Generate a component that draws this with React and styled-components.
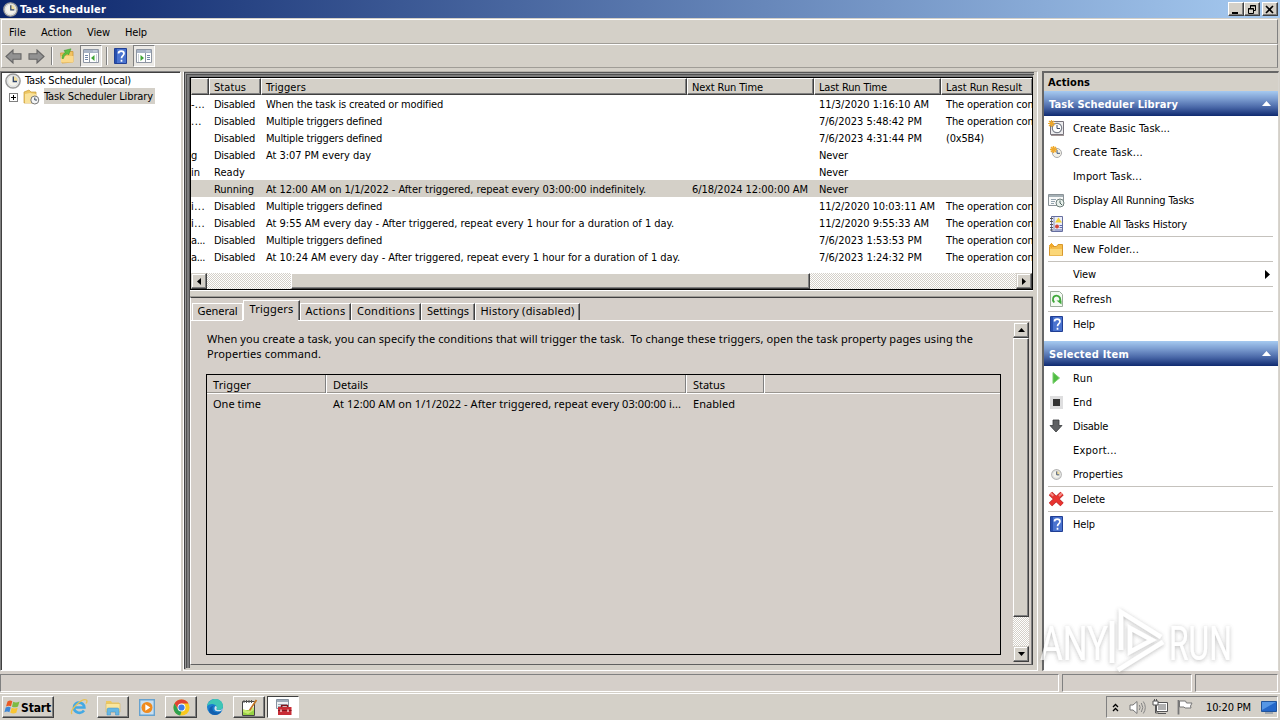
import React, { useLayoutEffect, useRef } from "react";
import styled, { createGlobalStyle, css } from "styled-components";

const FACE = "#d4d0c8";
const PANEL = "#d5cfc9";

const Global = createGlobalStyle`
  * { box-sizing: border-box; }
  html, body { margin: 0; padding: 0; overflow: hidden; background: ${FACE}; }
  body { font-family: "DejaVu Sans Condensed", "DejaVu Sans", sans-serif; font-size: 11px; line-height: 14px; color: #000; }
  svg { display: block; flex: none; }
`;

/* Text that tracks itself so its line fills the width that its design gives. */
const Line = styled.span`
  display: block;
  width: max-content;
  padding-top: 2px;
  white-space: pre;
  flex: none;
`;
function Fit({ w, children }) {
  const ref = useRef(null);
  useLayoutEffect(() => {
    const el = ref.current;
    el.style.letterSpacing = "0px";
    const natural = el.getBoundingClientRect().width;
    el.style.letterSpacing = `${(w - natural) / children.length}px`;
  }, [w, children]);
  return <Line ref={ref}>{children}</Line>;
}

const raised = css`
  border: 1px solid;
  border-color: #fff #404040 #404040 #fff;
  box-shadow: inset -1px -1px 0 #808080;
  background: ${FACE};
`;

const Screen = styled.div`
  width: 1280px;
  height: 720px;
  display: flex;
  flex-direction: column;
  background: ${FACE};
  position: relative;
  overflow: hidden;
`;

/* ---------- title, menu, toolbar ---------- */
const TitleBar = styled.header`
  height: 18px;
  flex: none;
  display: flex;
  align-items: center;
  padding: 0 2px 0 3px;
  gap: 2px;
  background: linear-gradient(90deg, #0a246a, #a6caf0);
  color: #fff;
  font-weight: bold;
`;
const WindowButtons = styled.div`
  margin-left: auto;
  display: flex;
`;
const WindowButton = styled.div`
  ${raised}
  width: 16px;
  height: 14px;
  margin-left: ${(p) => (p.$apart ? 2 : 0)}px;
  display: flex;
  align-items: center;
  justify-content: center;
`;
const MenuBar = styled.nav`
  height: 25px;
  flex: none;
  margin: 1px 2px 0 1px;
  border: 1px solid;
  border-color: #fff #808080 #a09d97 #fff;
  display: flex;
  align-items: center;
  padding-left: 7px;
  gap: 15px;
`;
const ToolBar = styled.div`
  height: 24px;
  flex: none;
  margin: 0 2px 0 1px;
  border: 1px solid;
  border-color: #fff #808080 #a09d97 #fff;
  display: flex;
  align-items: center;
  padding-left: 3px;
`;
const Tool = styled.div`
  width: ${(p) => p.$w || 22}px;
  height: 22px;
  margin-left: ${(p) => p.$ml || 0}px;
  display: flex;
  align-items: center;
  justify-content: center;
  ${(p) =>
    p.$pressed &&
    css`
      border: 1px solid;
      border-color: #808080 #fff #fff #808080;
      background: #ebe9e5;
    `}
`;
const ToolSep = styled.div`
  width: 2px;
  height: 18px;
  margin-left: ${(p) => p.$ml}px;
  border-left: 1px solid #808080;
  border-right: 1px solid #fff;
`;

/* ---------- main area ---------- */
const Main = styled.main`
  height: 600px;
  flex: none;
  margin-top: 3px;
  display: flex;
`;
const Tree = styled.aside`
  width: 181px;
  background: #fff;
  border: 1px solid;
  border-color: #808080 #fff #fff #808080;
  box-shadow: inset 1px 1px 0 #404040;
  padding: 1px 0 0 4px;
`;
const TreeRow = styled.div`
  height: 16px;
  display: flex;
  align-items: flex-start;
  padding-left: ${(p) => p.$indent || 0}px;
  gap: 4px;
`;
const TreeName = styled.span`
  height: 16px;
  margin-top: -1px;
  padding: 0 2px 0 0;
  background: ${(p) => (p.$selected ? FACE : "transparent")};
`;
const Expander = styled.span`
  width: 9px;
  height: 9px;
  border: 1px solid #808080;
  margin: 4px 1px 0 0;
`;

const Center = styled.section`
  width: 855px;
  margin-left: 2px;
  border: 1px solid;
  border-color: #b5b1aa #fff #fff #fff;
  display: flex;
  flex-direction: column;
`;
const Panes = styled.div`
  flex: 1;
  display: flex;
  flex-direction: column;
  padding: 5px 0 0 6px;
  background:
    linear-gradient(#444, #444) 0 0 / 1px 597px no-repeat,
    linear-gradient(#999, #999) 1px 1px / 1px 596px no-repeat,
    linear-gradient(#505050, #505050) 2px 2px / 1px 594px no-repeat,
    linear-gradient(#7d7d7d, #7d7d7d) 3px 3px / 2px 593px no-repeat,
    linear-gradient(#555, #555) 5px 5px / 1px 591px no-repeat,
    linear-gradient(#555, #555) 0 0 / 850px 1px no-repeat,
    linear-gradient(#999, #999) 1px 1px / 849px 1px no-repeat,
    linear-gradient(#505050, #505050) 2px 2px / 848px 1px no-repeat,
    linear-gradient(#7d7d7d, #7d7d7d) 3px 3px / 846px 2px no-repeat,
    ${FACE};
`;
const ListFrame = styled.div`
  height: 213px;
  margin-right: 4px;
  border: 1px solid #000;
  background: #fff;
  overflow: hidden;
  box-shadow: 0 1px 0 #fff;
`;
const Columns = styled.div`
  display: grid;
  grid-template-columns: 18px 52px 426px 127px 127px 92px;
`;
const HeadRow = styled(Columns)`
  height: 17px;
`;
const HeadCell = styled.div`
  ${raised}
  border-left-color: ${(p) => (p.$first ? FACE : "#fff")};
  padding: 0 0 0 4px;
  overflow: hidden;
  white-space: nowrap;
`;
const BodyRow = styled(Columns)`
  height: 17px;
  background: ${(p) => (p.$selected ? FACE : "#fff")};
`;
const Cell = styled.div`
  padding: 1px 0 0 ${(p) => (p.$first ? 0 : 5)}px;
  overflow: hidden;
  white-space: nowrap;
`;
const hatch = css`
  background: repeating-conic-gradient(#fff 0 25%, ${FACE} 0 50%) 0 0 / 2px 2px;
`;
const HScroll = styled.div`
  ${hatch}
  height: 16px;
  margin-top: 8px;
  display: flex;
`;
const ScrollButton = styled.div`
  ${raised}
  border-color: ${FACE} #404040 #404040 ${FACE};
  box-shadow: inset -1px -1px 0 #808080, inset 1px 1px 0 #fff;
  width: 16px;
  height: 16px;
  flex: none;
  display: flex;
  align-items: center;
  justify-content: center;
`;
const HThumb = styled.div`
  ${raised}
  width: 519px;
  margin-left: 84px;
  margin-right: auto;
`;

const Detail = styled.div`
  height: 368px;
  margin: 7px 4px 0 0;
  border: 1px solid;
  border-color: #404040 #404040 #606060 #fff;
  box-shadow: inset -1px 0 0 #808080, 0 -1px 0 #a09d97;
  display: flex;
  flex-direction: column;
  font-family: "Noto Sans", "Open Sans", sans-serif;
  background: ${PANEL};
`;
const Tabs = styled.div`
  height: 23px;
  flex: none;
  display: flex;
  align-items: flex-end;
  padding-left: 1px;
`;
const Tab = styled.div`
  width: ${(p) => p.$w}px;
  height: ${(p) => (p.$active ? 21 : 18)}px;
  border: solid #fff;
  border-width: 1px 1px 0 1px;
  border-right: 1px solid ${(p) => (p.$light ? "#fff" : "#404040")};
  box-shadow: ${(p) => (p.$light ? "none" : "inset -1px 0 0 #808080")};
  display: flex;
  justify-content: center;
  align-items: flex-start;
  ${Line} {
    margin-top: ${(p) => (p.$active ? -1 : -2)}px;
  }
`;
const TabPage = styled.div`
  flex: 1;
  display: flex;
  justify-content: space-between;
  margin-top: -1px;
  position: relative;
  padding: 2px 3px 1px 15px;
  &::before {
    content: "";
    position: absolute;
    left: 0;
    right: 2px;
    top: 0;
    height: 1px;
    background: linear-gradient(90deg, #fff 52px, ${PANEL} 52px, ${PANEL} 107px, #fff 107px);
  }
`;
const PageBody = styled.div`
  width: 795px;
`;
const Paragraph = styled.div`
  height: 52px;
  padding: 7px 0 0 1px;
  line-height: 15px;
  display: flex;
  flex-direction: column;
  align-items: flex-start;
  ${Line} + ${Line} {
    padding-top: 0;
  }
`;
const TriggerTable = styled.div`
  height: 281px;
  border: 1px solid #000;
`;
const TriggerCols = styled.div`
  display: grid;
  grid-template-columns: 119px 360px 78px 1fr;
`;
const TriggerHead = styled(TriggerCols)`
  height: 19px;
  border-bottom: 1px solid #fff;
  box-shadow: inset 0 -1px 0 #99958f;
`;
const TriggerCell = styled.div`
  padding: 1px 0 0 6px;
  height: 18px;
  & + & {
    padding-left: 7px;
  }
  ${(p) => p.$edge && css`border-right: 1px solid #808080; box-shadow: 1px 0 0 #fff;`}
`;
const VScroll = styled.div`
  ${hatch}
  width: 16px;
  height: 340px;
  display: flex;
  flex-direction: column;
`;
const VThumb = styled.div`
  ${raised}
  height: 279px;
  margin-bottom: auto;
`;

/* ---------- actions ---------- */
const Actions = styled.aside`
  width: 237px;
  margin-left: 4px;
  border: 1px solid;
  border-color: #808080 #d8d5cf #fff #666;
  border-left-width: 2px;
  border-top-width: 2px;
  background: #fff;
  border-top-color: #666;
`;
const ActionsTitle = styled.div`
  height: 18px;
  padding: 1px 0 0 4px;
  font-weight: bold;
  background: ${FACE};
`;
const GroupTitle = styled.div`
  height: 25px;
  display: flex;
  align-items: center;
  justify-content: space-between;
  padding: 0 7px 0 5px;
  margin-top: ${(p) => p.$mt || 0}px;
  color: #fff;
  font-weight: bold;
  background: linear-gradient(#a6caf0, #7e9fd2 30%, #4a68a8 65%, #0f2a70);
`;
const ActionRow = styled.div`
  height: 24px;
  display: flex;
  align-items: center;
  padding: 0 8px 0 3px;
`;
const IconSlot = styled.div`
  width: 18px;
  height: 18px;
  margin-right: 8px;
  display: flex;
  align-items: center;
  justify-content: center;
`;
const Push = styled.div`
  margin-left: auto;
`;
const Rule = styled.hr`
  height: 1px;
  border: 0;
  margin: 0 5px 0 4px;
  background: #c5c2bd;
`;

/* ---------- status bar and taskbar ---------- */
const StatusBar = styled.footer`
  height: 21px;
  flex: none;
  padding-top: 3px;
  display: flex;
  gap: 3px;
  background: ${PANEL};
`;
const StatusPart = styled.div`
  width: ${(p) => p.$w}px;
  border: 1px solid;
  border-color: #808080 #fff #fff #808080;
`;
const TaskBar = styled.footer`
  flex: 1;
  margin-top: 1px;
  border-top: 1px solid #fff;
  display: flex;
  align-items: flex-start;
  padding: 2px 2px 0 2px;
`;
const StartButton = styled.div`
  ${raised}
  width: 52px;
  height: 22px;
  display: flex;
  align-items: center;
  padding-left: 1px;
  margin-right: 9px;
  gap: 0;
  font-weight: bold;
  font-size: 12px;
`;
const TaskButton = styled.div`
  width: 32px;
  height: 22px;
  margin-right: 2px;
  display: flex;
  align-items: center;
  justify-content: center;
  ${(p) => p.$open && raised}
  ${(p) =>
    p.$active &&
    css`
      border: 1px solid;
      border-color: #404040 #fff #fff #404040;
      background: #fff;
    `}
`;
const Tray = styled.div`
  width: 172px;
  height: 22px;
  margin-left: auto;
  border: 1px solid;
  border-color: #808080 #fff #fff #808080;
  display: flex;
  align-items: center;
  padding: 0 0 0 5px;
`;
const TrayItem = styled.div`
  margin-right: ${(p) => p.$mr || 0}px;
`;
const Watermark = styled.div`
  position: absolute;
  left: 1038px;
  top: 604px;
  pointer-events: none;
`;

/* ---------- icons ---------- */
const Clock = ({ s = 16, ring = "#9a9a9a" }) => (
  <svg width={s} height={s} viewBox="0 0 16 16">
    <circle cx="8" cy="8" r="7.1" fill="#f5f3ea" stroke={ring} strokeWidth="1.5" />
    <path d="M8 8V3a5 5 0 0 1 5 5z" fill="#f3df9e" />
    <circle cx="8" cy="8" r="5.4" fill="none" stroke="#cfd6e2" strokeWidth=".8" />
    <path d="M8.3 3.500V8.500H12" fill="none" stroke="#30456b" strokeWidth="1.300" />
  </svg>
);
const FolderClock = () => (
  <svg width="17" height="16" viewBox="0 0 17 16">
    <path d="M1 3 6 1l2 2h5v11H1z" fill="#edc662" stroke="#c99c3a" strokeWidth=".7" />
    <path d="m2 5 5-1 6 1v9H2z" fill="#f9e29b" />
    <circle cx="11.800" cy="11" r="4" fill="#f4f5f6" stroke="#777" />
    <path d="M11.800 8.500V11H14" fill="none" stroke="#345" />
  </svg>
);
const Arrow = ({ flip }) => (
  <svg width="17" height="15" viewBox="0 0 17 15">
    <path
      transform={flip ? "matrix(-1 0 0 1 17 0)" : undefined}
      d="M1 7.500 8 1v3.700h8v5.600H8V14z"
      fill="#929292"
      stroke="#666"
      strokeWidth="1.100"
    />
  </svg>
);
const UpFolder = () => (
  <svg width="16" height="16" viewBox="0 0 16 16">
    <path d="M1.500 5h5l1.500-1.500h6V14l-11 1z" fill="#f2c261" stroke="#cf9837" strokeWidth=".8" />
    <path d="M2 8h12.500v6.500H2z" fill="#fbd98b" />
    <path d="M3 10.500C3 7.500 4 5.500 6.500 4.500L5 2.500 12 .800 9.500 7 8.300 5.800C6.500 6.500 5 8 4.500 10.500z" fill="#5fc043" stroke="#399424" strokeWidth=".5" />
  </svg>
);
const PaneIcon = ({ flip }) => (
  <svg width="16" height="14" viewBox="0 0 16 14">
    <path d="M.5.5h15v13H.5z" fill="#fff" stroke="#8e96a3" />
    <path d="M1 1h14v3H1z" fill="#a9b4c6" />
    <path d="M10.500 2h1M12.500 2h1" stroke="#fff" />
    <g transform={flip ? "matrix(-1 0 0 1 16 0)" : undefined}>
      <path d="M6.500 4v9" stroke="#8e96a3" />
      <path d="M2 6.500h3M2 8.500h3M2 10.500h3" stroke="#7186a8" />
      <path d="m8 9 3.500-3v6z" fill="#3fa535" />
      <path d="M13.500 5v8" stroke="#ccd1d8" />
    </g>
  </svg>
);
const HelpIcon = () => (
  <svg width="13" height="16" viewBox="0 0 13 16">
    <path d="M.5.5h12v15H.5z" fill="#4a73cf" stroke="#213f94" />
    <path d="M1 1h2v14H1z" fill="#2750b0" />
    <path d="M4.500 5.500C4.500 2.300 10 2.300 10 5.500 10 7.600 7.500 7.500 7.500 10.200M7.500 11.700v2" fill="none" stroke="#fff" strokeWidth="1.700" />
  </svg>
);
const BasicTask = () => (
  <svg width="16" height="16" viewBox="0 0 16 16">
    <path d="M2.500 1.500h13v13h-13z" fill="#ececee" stroke="#77737c" />
    <path d="M3 15.300h13" stroke="#8b7c7c" />
    <circle cx="9" cy="8" r="4.700" fill="#fff" stroke="#7c818c" strokeWidth="1.200" />
    <path d="M9 5v3.500h3" fill="none" stroke="#3c4b67" />
    <path d="M3.500 0v7M0 3.500h7M1 1l5 5M6 1 1 6" stroke="#eda72c" strokeWidth="1.200" />
  </svg>
);
const NewTask = () => (
  <svg width="14" height="14" viewBox="0 0 14 14">
    <circle cx="8" cy="8" r="4.500" fill="#f3f1e7" stroke="#a9a9aa" />
    <path d="M8 5v3.300h3" fill="none" stroke="#3d587e" />
    <path d="M4.500 1v7M1 4.500h7M2 2l5 5M7 2 2 7" stroke="#f0a92b" strokeWidth="1.500" />
  </svg>
);
const RunningTasks = () => (
  <svg width="17" height="15" viewBox="0 0 17 15">
    <path d="M.5 1.500h15v11H.5z" fill="#f8f9f9" stroke="#8a9297" />
    <path d="M1 2h14v2H1z" fill="#a5b0b5" />
    <path d="M3 6.500h5M3 8.500h4M3 10.500h3M10 6.500h4" stroke="#94a3ae" />
    <circle cx="12" cy="10" r="4" fill="#e9f1ec" stroke="#6f7f7c" />
    <path d="M12 7.500V10l2 2" fill="none" stroke="#4a605c" />
  </svg>
);
const HistoryIcon = () => (
  <svg width="15" height="16" viewBox="0 0 15 16">
    <path d="M2.500.5h11v15h-11z" fill="#eceef7" stroke="#666fa0" />
    <path d="M5 1v14" stroke="#8990b5" />
    <path d="M1 2.500h3M1 5.500h3M1 8.500h3M1 11.500h3M1 14h3" stroke="#555" />
    <path d="m9.500 1.500 3.500 5H6z" fill="#f2d235" />
    <circle cx="8" cy="10.500" r="2" fill="#d44637" />
    <path d="M10.500 9.500H13M10.500 11.500H13M6 14h7" stroke="#5d69ad" />
  </svg>
);
const NewFolder = () => (
  <svg width="16" height="15" viewBox="0 0 16 15">
    <path d="M1.500 4.500h7l1.500-2h4.500v11h-13z" fill="#f5bd4b" stroke="#d8982c" />
    <path d="M2 7h12v6.500H2z" fill="#fbd778" />
    <path d="M3.500 1v5M1 3.500h5M2 2l3 3M5 2 2 5" stroke="#f0a92b" />
  </svg>
);
const RefreshIcon = () => (
  <svg width="13" height="16" viewBox="0 0 13 16">
    <path d="M.5.5h9l3 3v12H.5z" fill="#f4faf3" stroke="#9cac9b" />
    <path d="M4.300 11.500C1.500 8.500 3.300 4.700 6.500 4.700s4.800 3.500 3 5.800" fill="none" stroke="#3fa83a" strokeWidth="1.800" />
    <path d="M6.500 9.500h5v4z" fill="#3fa83a" />
  </svg>
);
const RunIcon = () => (
  <svg width="14" height="14" viewBox="0 0 14 14">
    <path d="m4 1.500 6.500 5.500L4 12.500z" fill="#51bd43" stroke="#79cf6e" />
  </svg>
);
const EndIcon = () => (
  <svg width="13" height="13" viewBox="0 0 13 13">
    <path d="M0 0h13v13H0z" fill="#dededf" />
    <path d="M3 3h7v7H3z" fill="#333" />
  </svg>
);
const DisableIcon = () => (
  <svg width="14" height="14" viewBox="0 0 14 14">
    <path d="M4 1h6v5.500h3L7 13 1 6.500h3z" fill="#5f6163" stroke="#393b3d" strokeWidth=".8" />
  </svg>
);
const DeleteIcon = () => (
  <svg width="17" height="16" viewBox="0 0 17 16">
    <path d="M2.500 2.500 14 13.500M14 2.500 2.500 13.500" stroke="#b92e2d" strokeWidth="4.800" />
    <path d="M2.500 2.500 14 13.500M14 2.500 2.500 13.500" stroke="#e83430" strokeWidth="3.600" />
    <path d="m2.300 2 3 2.800M14 2.300 11 5.100" stroke="#f58a84" strokeWidth="2" />
  </svg>
);
const Tri = ({ dir, c = "#000", w = 7, h = 4 }) => {
  const d = {
    up: `M0 ${h}H${w}L${w / 2} 0z`,
    down: `M0 0H${w}L${w / 2} ${h}z`,
    left: `M${w} 0V${h}L0 ${h / 2}z`,
    right: `M0 0V${h}L${w} ${h / 2}z`,
  }[dir];
  return (
    <svg width={w} height={h}>
      <path d={d} fill={c} />
    </svg>
  );
};
const WindowsFlag = () => (
  <svg width="17" height="16" viewBox="0 0 17 16">
    <path d="M3.500 2.500C5.500 1.200 7 1.500 8.300 2.300L7 7.300C5.500 6.400 4 6.500 2 7.400z" fill="#ea5a24" />
    <path d="M9.200 2.800c2 1 4 .9 6.300-.3L14 7.500c-2 1-4 1.200-6 .2z" fill="#7dbb42" />
    <path d="M1.700 8.400c2-1 3.700-1 5 0L5.400 13.300c-1.500-1-3-1-5-.1z" fill="#3e87d6" />
    <path d="M7.700 8.800c2 1 3.900.9 6-.1l-1.400 5c-2 1-4 1-6 0z" fill="#f9c532" />
  </svg>
);
const Explorer = () => (
  <svg width="18" height="17" viewBox="0 0 18 17">
    <path d="M2 2h5l1 1.500h7V12H2z" fill="#edc85e" />
    <path d="M2 4.500h14V13H2z" fill="#fae69d" stroke="#d8b75b" strokeWidth=".6" />
    <path d="M3 16V10.500q0-1.500 1.500-1.500h9q1.500 0 1.500 1.500V16h-3.500v-3h-5v3z" fill="#65b7e3" stroke="#4391c4" strokeWidth=".5" />
  </svg>
);
const IE = () => (
  <svg width="18" height="18" viewBox="0 0 18 18">
    <path d="M14 12.500C10.500 17 3.800 14.500 4 9.300 4.200 3 14 3 14.300 9.500H5.200" fill="none" stroke="#43a9e4" strokeWidth="2.700" />
    <path d="M2 16C-1 12.500 12-.5 16.500 2c1 1 .2 2.500-.5 3.500" fill="none" stroke="#e7c155" strokeWidth="1.300" />
  </svg>
);
const Player = () => (
  <svg width="16" height="17" viewBox="0 0 16 17">
    <path d="M.7.700h14.600v15.600H.7z" fill="#c9dff0" stroke="#66a2cf" strokeWidth="1.400" />
    <circle cx="8" cy="8.500" r="5.500" fill="#f08b1e" />
    <path d="m6.300 5.300 5 3.200-5 3.200z" fill="#fff" />
  </svg>
);
const Chrome = () => (
  <svg width="17" height="17" viewBox="0 0 18 18">
    <circle cx="9" cy="9" r="8.500" fill="#f9c81e" />
    <path d="M1.600 4.800A8.500 8.500 0 0 1 16.400 4.800H9L5.400 11z" fill="#e04234" />
    <path d="M1.600 4.800 5.400 11.100 9 13l-1.400 4.400A8.500 8.500 0 0 1 1.600 4.800z" fill="#2da150" />
    <circle cx="9" cy="9" r="4.200" fill="#fff" />
    <circle cx="9" cy="9" r="3.300" fill="#3d7ce8" />
  </svg>
);
const Edge = () => (
  <svg width="18" height="18" viewBox="0 0 18 18">
    <circle cx="9" cy="9" r="8" fill="#1a7fcf" />
    <path d="M1 8.500C2 3 6 1 9.500 1 14 1 17 4.500 17 8c0 2.500-1.500 4-4.500 4-2 0-2.700-.7-2-1.700C12 7 5 3.500 1 8.500z" fill="#3ec6b5" />
    <path d="M6.500 9.500C6 14 11 16 15.500 13 13 17.500 7 18 4 15c-2-3-.5-7 4.500-7.500-1 .5-1.800 1-2 2z" fill="#135fae" />
    <path d="M9.500 8c1.500.5 1.500 1.500 1 2.500-.4 1 .8 1.700 2.500 1.600 2-.1 3.500-1 4-2.200 0 3-4 4-6.500 3.200C8 12.300 8 9.500 9.500 8z" fill="#d9e4ec" />
  </svg>
);
const Notepad = () => (
  <svg width="17" height="17" viewBox="0 0 17 17">
    <path d="M1.500 2.500h12v14h-12z" fill="#fff" stroke="#444" />
    <path d="M3 1v3M5.500 1v3M8 1v3M10.500 1v3" stroke="#555" />
    <path d="M2 11h11v5H2z" fill="#95d143" />
    <path d="m2 10 5 2 6-4v3l-6 4-5-2z" fill="#c9ea72" />
    <path d="M15.500 1 8.500 11.500" stroke="#c27624" strokeWidth="1.800" />
  </svg>
);
const Toolbox = () => (
  <svg width="17" height="17" viewBox="0 0 17 17">
    <path d="M1.500.5h12v9h-12z" fill="#eef1f4" stroke="#8592a0" />
    <path d="M2 1h11v2H2z" fill="#9eacba" />
    <path d="M3 5.500h9M3 7.500h5" stroke="#9eabb8" />
    <path d="M6.500 8V6.500h6V8" fill="none" stroke="#81131b" strokeWidth="1.300" />
    <path d="M3 8h13.500v8H3z" fill="#c72c35" />
    <path d="M3 11.500h13.500" stroke="#841820" />
    <path d="M6 10.500v2.500M13 10.500v2.500" stroke="#f3c9c9" strokeWidth="1.500" />
  </svg>
);
const Speaker = () => (
  <svg width="17" height="15" viewBox="0 0 17 15">
    <path d="M1 5h3l4-3.500v12L4 10H1z" fill="#fff" stroke="#777" />
    <path d="M10.300 5q1.700 2.500 0 5M12.300 3q3 4.500 0 9M14.300 1.500q4 6 0 12" fill="none" stroke="#858585" />
  </svg>
);
const Network = () => (
  <svg width="17" height="16" viewBox="0 0 17 16">
    <path d="M4.500 3.500h11v9h-11z" fill="#fff" stroke="#555" />
    <path d="M6 5h8v6H6z" fill="#b0b0b0" />
    <path d="M6 14.500h8" stroke="#555" />
    <path d="M1 2h5v4H1z" fill="#fff" stroke="#555" />
    <path d="M2.500 0v2M4.500 0v2M3.500 6v8h3" fill="none" stroke="#555" />
  </svg>
);
const Flag = () => (
  <svg width="16" height="16" viewBox="0 0 16 16">
    <path d="M1.500 1v14.500" stroke="#777" strokeWidth="1.800" />
    <path d="M2.500 2h6l1 2h5.500l-1.500 3 .5 2H8L7 8H2.500z" fill="#fff" stroke="#777" />
  </svg>
);
const Desktop = () => (
  <svg width="16" height="13" viewBox="0 0 16 13">
    <path d="M.5.500h15v10H.5z" fill="#2467c9" stroke="#21549b" />
    <path d="M1 1h14L1 9z" fill="#5596e5" />
    <path d="M4 12h8" stroke="#6a7e98" />
  </svg>
);

/* ---------- data ---------- */
const done = ["The operation com", 91];
const disabled = ["Disabled", 41];
const multiple = ["Multiple triggers defined", 116];
const never = ["Never", 29];
const tasks = [
  [["-...", 14], disabled, ["When the task is created or modified", 177], null, ["11/3/2020 1:16:10 AM", 110], done],
  [["...", 11], disabled, multiple, null, ["7/6/2023 5:48:42 PM", 103], done],
  [null, disabled, multiple, null, ["7/6/2023 4:31:44 PM", 103], ["(0x5B4)", 38]],
  [["g", 6], disabled, ["At 3:07 PM every day", 105], null, never, null],
  [["in", 9], ["Ready", 31], null, null, never, null],
  [null, ["Running", 40], ["At 12:00 AM on 1/1/2022 - After triggered, repeat every 03:00:00 indefinitely.", 380], ["6/18/2024 12:00:00 AM", 116], never, null],
  [["i...", 14], disabled, multiple, null, ["11/2/2020 10:03:11 AM", 116], done],
  [["i...", 14], disabled, ["At 9:55 AM every day - After triggered, repeat every 1 hour for a duration of 1 day.", 408], null, ["11/2/2020 9:55:33 AM", 110], done],
  [["...", 14], disabled, multiple, null, ["7/6/2023 1:53:53 PM", 103], done],
  [["...", 14], disabled, ["At 10:24 AM every day - After triggered, repeat every 1 hour for a duration of 1 day.", 414], null, ["7/6/2023 1:24:32 PM", 103], done],
];
tasks[8][0] = ["a...", 14];
tasks[9][0] = ["a...", 14];
const heads = [null, ["Status", 32], ["Triggers", 40], ["Next Run Time", 71], ["Last Run Time", 68], ["Last Run Result", 76]];
const tabs = [
  ["General", 40, 51, "light"],
  ["Triggers", 44, 57, "active"],
  ["Actions", 40, 51],
  ["Conditions", 58, 70],
  ["Settings", 42, 54],
  ["History (disabled)", 94, 105],
];
const libraryActions = [
  [BasicTask, "Create Basic Task...", 97],
  [NewTask, "Create Task...", 70],
  [null, "Import Task...", 69],
  [RunningTasks, "Display All Running Tasks", 121],
  [HistoryIcon, "Enable All Tasks History", 114],
  "rule",
  [NewFolder, "New Folder...", 66],
  "rule",
  [null, "View", 23, true],
  "rule",
  [RefreshIcon, "Refresh", 39],
  "rule",
  [HelpIcon, "Help", 22],
];
const itemActions = [
  [RunIcon, "Run", 20],
  [EndIcon, "End", 19],
  [DisableIcon, "Disable", 35],
  [null, "Export...", 44],
  [() => <Clock s={11} ring="#b4b4b4" />, "Properties", 50],
  "rule",
  [DeleteIcon, "Delete", 32],
  "rule",
  [HelpIcon, "Help", 22],
];

const text = (t) => t && <Fit w={t[1]}>{t[0]}</Fit>;

const ActionList = ({ items }) =>
  items.map((it, i) => {
    if (it === "rule") return <Rule key={i} />;
    const [Icon, label, w, sub] = it;
    return (
      <ActionRow key={i}>
        <IconSlot>{Icon && <Icon />}</IconSlot>
        <Fit w={w}>{label}</Fit>
        {sub && <Push><Tri dir="right" w={5} h={9} /></Push>}
      </ActionRow>
    );
  });

export default function App() {
  return (
    <Screen>
      <Global />
      <TitleBar>
        <Clock s={15} />
        <Fit w={86}>Task Scheduler</Fit>
        <WindowButtons>
          <WindowButton>
            <svg width="10" height="9"><path d="M1 7h6v2H1z" /></svg>
          </WindowButton>
          <WindowButton>
            <svg width="10" height="9" fill="none" stroke="#000">
              <path d="M3.500 3V.5h5v5H7M3 1h6M1.500 3.500h5v5h-5zM1 4h6" />
            </svg>
          </WindowButton>
          <WindowButton $apart>
            <svg width="10" height="9"><path d="m1 1 7 7M8 1 1 8" stroke="#000" strokeWidth="1.600" /></svg>
          </WindowButton>
        </WindowButtons>
      </TitleBar>
      <MenuBar>
        <Fit w={17}>File</Fit>
        <Fit w={31}>Action</Fit>
        <Fit w={23}>View</Fit>
        <Fit w={22}>Help</Fit>
      </MenuBar>
      <ToolBar>
        <Tool $w={17}><Arrow /></Tool>
        <Tool $w={17} $ml={6}><Arrow flip /></Tool>
        <ToolSep $ml={6} />
        <Tool $w={18} $ml={5}><UpFolder /></Tool>
        <Tool $ml={4} $pressed><PaneIcon /></Tool>
        <ToolSep $ml={4} />
        <Tool $w={16} $ml={4}><HelpIcon /></Tool>
        <Tool $ml={5} $pressed><PaneIcon flip /></Tool>
      </ToolBar>

      <Main>
        <Tree>
          <TreeRow><Clock /><TreeName><Fit w={106}>Task Scheduler (Local)</Fit></TreeName></TreeRow>
          <TreeRow $indent={4}>
            <Expander><svg width="7" height="7"><path d="M1 3.500h5M3.500 1v5" stroke="#000" /></svg></Expander>
            <FolderClock />
            <TreeName $selected><Fit w={109}>Task Scheduler Library</Fit></TreeName>
          </TreeRow>
        </Tree>

        <Center>
          <Panes>
            <ListFrame>
              <HeadRow>{heads.map((h, i) => <HeadCell key={i} $first={i === 0}>{text(h)}</HeadCell>)}</HeadRow>
              {tasks.map((row, r) => (
                <BodyRow key={r} $selected={r === 5}>
                  {row.map((c, i) => <Cell key={i} $first={i === 0}>{text(c)}</Cell>)}
                </BodyRow>
              ))}
              <HScroll>
                <ScrollButton><Tri dir="left" w={4} h={7} /></ScrollButton>
                <HThumb />
                <ScrollButton><Tri dir="right" w={4} h={7} /></ScrollButton>
              </HScroll>
            </ListFrame>
            <Detail>
              <Tabs>
                {tabs.map(([name, w, full, kind]) => (
                  <Tab key={name} $w={full} $active={kind === "active"} $light={kind === "light"}>
                    <Fit w={w}>{name}</Fit>
                  </Tab>
                ))}
              </Tabs>
              <TabPage>
                <PageBody>
                  <Paragraph>
                    <Fit w={766}>When you create a task, you can specify the conditions that will trigger the task.  To change these triggers, open the task property pages using the</Fit>
                    <Fit w={114}>Properties command.</Fit>
                  </Paragraph>
                  <TriggerTable>
                    <TriggerHead>
                      <TriggerCell $edge><Fit w={38}>Trigger</Fit></TriggerCell>
                      <TriggerCell $edge><Fit w={35}>Details</Fit></TriggerCell>
                      <TriggerCell $edge><Fit w={32}>Status</Fit></TriggerCell>
                    </TriggerHead>
                    <TriggerCols>
                      <TriggerCell><Fit w={48}>One time</Fit></TriggerCell>
                      <TriggerCell><Fit w={348}>At 12:00 AM on 1/1/2022 - After triggered, repeat every 03:00:00 i...</Fit></TriggerCell>
                      <TriggerCell><Fit w={42}>Enabled</Fit></TriggerCell>
                    </TriggerCols>
                  </TriggerTable>
                </PageBody>
                <VScroll>
                  <ScrollButton><Tri dir="up" /></ScrollButton>
                  <VThumb />
                  <ScrollButton><Tri dir="down" /></ScrollButton>
                </VScroll>
              </TabPage>
            </Detail>
          </Panes>
        </Center>

        <Actions>
          <ActionsTitle><Fit w={42}>Actions</Fit></ActionsTitle>
          <GroupTitle><Fit w={129}>Task Scheduler Library</Fit><Tri dir="up" c="#fff" w={9} h={5} /></GroupTitle>
          <ActionList items={libraryActions} />
          <GroupTitle $mt={5}><Fit w={80}>Selected Item</Fit><Tri dir="up" c="#fff" w={9} h={5} /></GroupTitle>
          <ActionList items={itemActions} />
        </Actions>
      </Main>

      <StatusBar>
        <StatusPart $w={1059} />
        <StatusPart $w={130} />
        <StatusPart $w={83} />
      </StatusBar>
      <TaskBar>
        <StartButton><WindowsFlag /><Fit w={30}>Start</Fit></StartButton>
        <TaskButton><IE /></TaskButton>
        <TaskButton $open><Explorer /></TaskButton>
        <TaskButton><Player /></TaskButton>
        <TaskButton $open><Chrome /></TaskButton>
        <TaskButton><Edge /></TaskButton>
        <TaskButton $open><Notepad /></TaskButton>
        <TaskButton $active><Toolbox /></TaskButton>
        <Tray>
          <TrayItem $mr={10}>
            <svg width="7" height="9"><path d="m1 4 2.500-2.500L6 4M1 8l2.500-2.500L6 8" fill="none" stroke="#000" strokeWidth="1.300" /></svg>
          </TrayItem>
          <TrayItem $mr={6}><Speaker /></TrayItem>
          <TrayItem $mr={8}><Network /></TrayItem>
          <TrayItem $mr={13}><Flag /></TrayItem>
          <TrayItem $mr={10}><Fit w={45}>10:20 PM</Fit></TrayItem>
          <TrayItem><Desktop /></TrayItem>
        </Tray>
      </TaskBar>

      <Watermark>
        <svg width="200" height="72" viewBox="0 0 200 72">
          <defs>
            <filter id="soft" x="-10%" y="-20%" width="120%" height="140%">
              <feDropShadow dx="0" dy="1" stdDeviation="2" floodColor="#555" floodOpacity=".55" />
            </filter>
          </defs>
          <g filter="url(#soft)" opacity=".72" fill="#fff" fontFamily="Roboto, sans-serif" fontSize="48">
            <text x="2" y="56" textLength="68" lengthAdjust="spacingAndGlyphs">ANY</text>
            <text x="131" y="56" textLength="63" lengthAdjust="spacingAndGlyphs">RUN</text>
            <path d="M74 17v42M83 46V8l40 25M80 66l45-28M92 24v24l22-12z" fill="none" stroke="#fff" strokeWidth="4.500" />
          </g>
        </svg>
      </Watermark>
    </Screen>
  );
}
